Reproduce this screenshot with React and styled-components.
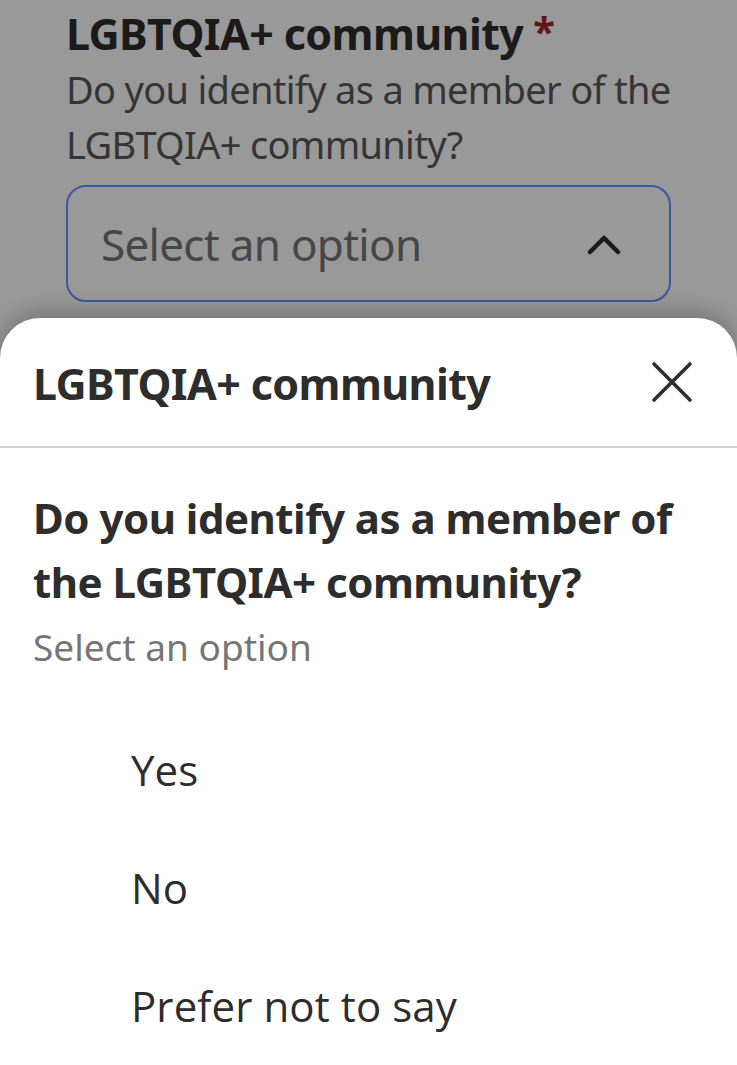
import React from "react";
import styled, { createGlobalStyle } from "styled-components";

const Global = createGlobalStyle`
  html, body { margin: 0; padding: 0; background: #ffffff; }
  body { font-family: "Noto Sans", "Open Sans", sans-serif; color: #2d2d2d; overflow: hidden; }
  * { box-sizing: border-box; }
`;

const Page = styled.div`
  width: 737px;
  height: 1065px;
  position: relative;
  overflow: hidden;
  background: #ffffff;
`;

const Form = styled.section`
  padding: 6px 64px 0 66px;
  display: flex;
  flex-direction: column;
`;

const FieldLabel = styled.div`
  font-size: 43px;
  font-weight: 700;
  letter-spacing: -0.6px;
  line-height: 56px;
  color: #2d2d2d;
  display: flex;
  align-items: flex-start;
`;

const Required = styled.span`
  color: #a4282e;
  font-size: 40px;
  margin-left: 10px;
  line-height: 50px;
`;

const FieldHint = styled.div`
  font-size: 38px;
  font-weight: 400;
  letter-spacing: -0.7px;
  line-height: 55px;
  color: #595959;
`;

const SelectBox = styled.div`
  margin-top: 13px;
  margin-right: 2px;
  height: 117px;
  border: 2px solid #6496ff;
  border-radius: 20px;
  display: flex;
  align-items: center;
  justify-content: space-between;
  padding: 0 48px 0 33px;
`;

const Placeholder = styled.span`
  font-size: 44px;
  letter-spacing: -0.7px;
  color: #767676;
`;

const Backdrop = styled.div`
  position: absolute;
  inset: 0;
  background: rgba(0, 0, 0, 0.4);
`;

const Sheet = styled.div`
  position: absolute;
  left: 0;
  right: 0;
  top: 318px;
  bottom: 0;
  background: #ffffff;
  border-radius: 40px 40px 0 0;
  box-shadow: 0 -6px 24px rgba(0, 0, 0, 0.25);
  display: flex;
  flex-direction: column;
`;

const SheetHeader = styled.header`
  height: 130px;
  display: flex;
  align-items: center;
  justify-content: space-between;
  padding: 0 44px 0 33px;
  border-bottom: 2px solid #d4d2d0;
`;

const SheetTitle = styled.h2`
  margin: 0;
  font-size: 43px;
  font-weight: 700;
  letter-spacing: -0.6px;
  line-height: 56px;
  color: #2d2d2d;
  padding-top: 4px;
`;

const CloseButton = styled.button`
  border: 0;
  background: none;
  padding: 0;
  width: 42px;
  height: 42px;
  display: flex;
  align-items: center;
  justify-content: center;
  cursor: pointer;
`;

const SheetBody = styled.div`
  padding: 38px 33px 0 33px;
  display: flex;
  flex-direction: column;
`;

const Question = styled.h3`
  margin: 0;
  font-size: 42px;
  font-weight: 700;
  letter-spacing: -0.5px;
  line-height: 64px;
  color: #2d2d2d;
`;

const SubHint = styled.div`
  font-size: 37px;
  letter-spacing: 0px;
  line-height: 50px;
  color: #767676;
  margin-top: 8px;
`;

const OptionList = styled.ul`
  list-style: none;
  margin: 38px 0 0 0;
  padding: 0 0 0 98px;
  display: flex;
  flex-direction: column;
`;

const Option = styled.li`
  height: 118px;
  display: flex;
  align-items: center;
  font-size: 42px;
  font-weight: 400;
  color: #2d2d2d;
  letter-spacing: 0.1px;
  font-family: "Open Sans", "Noto Sans", sans-serif;
`;

const Chevron = () => (
  <svg width="34" height="22" viewBox="0 0 34 22" fill="none">
    <path d="M3 19 L17 5 L31 19" stroke="#2d2d2d" strokeWidth="4.5" strokeLinecap="round" strokeLinejoin="round" />
  </svg>
);

const CloseIcon = () => (
  <svg width="42" height="42" viewBox="0 0 42 42" fill="none">
    <path d="M3 3 L39 39 M39 3 L3 39" stroke="#2d2d2d" strokeWidth="3.6" strokeLinecap="round" />
  </svg>
);

const options = ["Yes", "No", "Prefer not to say"];

export default function App() {
  return (
    <Page>
      <Global />
      <Form>
        <FieldLabel>
          LGBTQIA+ community<Required>*</Required>
        </FieldLabel>
        <FieldHint>Do you identify as a member of the LGBTQIA+ community?</FieldHint>
        <SelectBox>
          <Placeholder>Select an option</Placeholder>
          <Chevron />
        </SelectBox>
      </Form>
      <Backdrop />
      <Sheet>
        <SheetHeader>
          <SheetTitle>LGBTQIA+ community</SheetTitle>
          <CloseButton aria-label="Close">
            <CloseIcon />
          </CloseButton>
        </SheetHeader>
        <SheetBody>
          <Question>Do you identify as a member of the LGBTQIA+ community?</Question>
          <SubHint>Select an option</SubHint>
          <OptionList>
            {options.map((o) => (
              <Option key={o}>{o}</Option>
            ))}
          </OptionList>
        </SheetBody>
      </Sheet>
    </Page>
  );
}
